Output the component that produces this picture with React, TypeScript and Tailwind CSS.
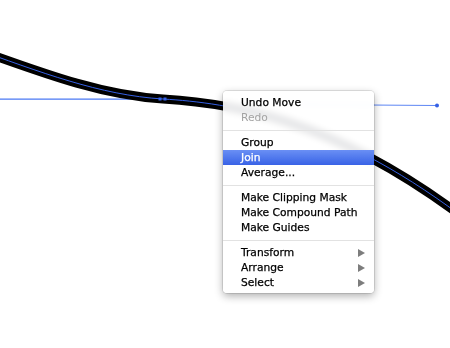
const groups: { label: string; disabled?: boolean; active?: boolean; sub?: boolean }[][] = [
  [{ label: 'Undo Move' }, { label: 'Redo', disabled: true }],
  [{ label: 'Group' }, { label: 'Join', active: true }, { label: 'Average...' }],
  [{ label: 'Make Clipping Mask' }, { label: 'Make Compound Path' }, { label: 'Make Guides' }],
  [
    { label: 'Transform', sub: true },
    { label: 'Arrange', sub: true },
    { label: 'Select', sub: true },
  ],
]

const curve = 'M -30 47 C 40 72, 100 95.2, 163 99 C 230 103, 330 118, 460 215'

function Canvas() {
  return (
    <svg width="450" height="348" viewBox="0 0 450 348" className="block">
      {/* left handle */}
      <line x1="0" y1="99.2" x2="163" y2="99.2" stroke="#4a78f4" strokeWidth="1.2" />
      {/* path */}
      <path d={curve} fill="none" stroke="#000" strokeWidth="9" />
      <path d={curve} fill="none" stroke="#3560e4" strokeWidth="1" />
      <rect x="158.5" y="97.5" width="3" height="3" fill="#3560e4" />
      <rect x="163.5" y="97.5" width="3" height="3" fill="#3560e4" />
      {/* right handle */}
      <line x1="300" y1="104.5" x2="437" y2="105.5" stroke="#5d86f4" strokeWidth="1" />
      <circle cx="437" cy="105.5" r="2" fill="#3560e4" />
    </svg>
  )
}

function Arrow() {
  return (
    <svg width="7" height="8" viewBox="0 0 7 8">
      <polygon points="0,0 7,4 0,8" fill="#7d7d7d" />
    </svg>
  )
}

export default function App() {
  return (
    <div className="relative w-[450px] h-[348px] overflow-hidden bg-white">
      <Canvas />

      {/* Context menu */}
      <div
        className="absolute left-[223px] top-[91px] w-[151px] pt-[4px] pb-[3px] rounded-[4px] bg-white/90 backdrop-blur-[3px] ring-1 ring-black/10 shadow-[0_3px_9px_rgba(0,0,0,0.32)] text-[10.7px] leading-[15px] text-black"
        style={{ fontFamily: '"DejaVu Sans", "Liberation Sans", sans-serif' }}
      >
        {groups.map((items, gi) => (
          <div key={gi}>
            {gi > 0 && (
              <div className="h-[10px] flex items-center">
                <div className="h-px w-full bg-[#e2e2e2]" />
              </div>
            )}
            {items.map(item => (
              <div
                key={item.label}
                className={`h-[15px] pl-[18px] pr-[9px] flex items-center justify-between ${
                  item.active ? 'bg-linear-to-b from-[#6a8ff4] to-[#3962e6] text-white' : ''
                } ${item.disabled ? 'text-[#a3a3a3]' : '[-webkit-text-stroke:0.25px_currentColor]'}`}
              >
                <span>{item.label}</span>
                {item.sub && <Arrow />}
              </div>
            ))}
          </div>
        ))}
      </div>
    </div>
  )
}
